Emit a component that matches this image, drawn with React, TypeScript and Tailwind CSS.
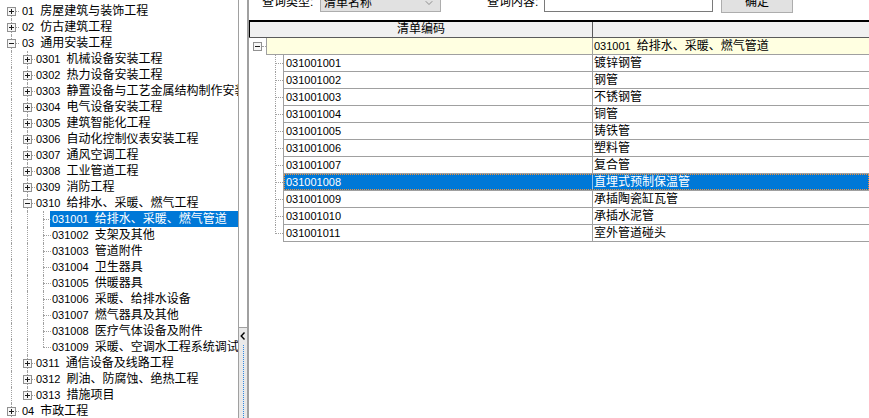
import { ChevronDown } from 'lucide-react';

type TreeNode = { code: string; name: string; open?: boolean; children?: TreeNode[] };

const leaf = (code: string, name: string): TreeNode => ({ code, name });
const shut = (code: string, name: string): TreeNode => ({ code, name, children: [] });

// 左侧清单章节树（只展开 03 / 0310）
const tree: TreeNode[] = [
  shut('01', '房屋建筑与装饰工程'),
  shut('02', '仿古建筑工程'),
  {
    code: '03',
    name: '通用安装工程',
    open: true,
    children: [
      shut('0301', '机械设备安装工程'),
      shut('0302', '热力设备安装工程'),
      shut('0303', '静置设备与工艺金属结构制作安装工程'),
      shut('0304', '电气设备安装工程'),
      shut('0305', '建筑智能化工程'),
      shut('0306', '自动化控制仪表安装工程'),
      shut('0307', '通风空调工程'),
      shut('0308', '工业管道工程'),
      shut('0309', '消防工程'),
      {
        code: '0310',
        name: '给排水、采暖、燃气工程',
        open: true,
        children: [
          leaf('031001', '给排水、采暖、燃气管道'),
          leaf('031002', '支架及其他'),
          leaf('031003', '管道附件'),
          leaf('031004', '卫生器具'),
          leaf('031005', '供暖器具'),
          leaf('031006', '采暖、给排水设备'),
          leaf('031007', '燃气器具及其他'),
          leaf('031008', '医疗气体设备及附件'),
          leaf('031009', '采暖、空调水工程系统调试'),
        ],
      },
      shut('0311', '通信设备及线路工程'),
      shut('0312', '刷油、防腐蚀、绝热工程'),
      shut('0313', '措施项目'),
    ],
  },
  shut('04', '市政工程'),
  shut('05', '园林绿化工程'),
];

const SELECTED_NODE = '031001';

const gridRows: [string, string][] = [
  ['031001001', '镀锌钢管'],
  ['031001002', '钢管'],
  ['031001003', '不锈钢管'],
  ['031001004', '铜管'],
  ['031001005', '铸铁管'],
  ['031001006', '塑料管'],
  ['031001007', '复合管'],
  ['031001008', '直埋式预制保温管'],
  ['031001009', '承插陶瓷缸瓦管'],
  ['031001010', '承插水泥管'],
  ['031001011', '室外管道碰头'],
];

const SELECTED_ROW = '031001008';

type FlatRow = { node: TreeNode; level: number; first: boolean; last: boolean; guides: boolean[] };

function flatten(nodes: TreeNode[], level: number, guides: boolean[], out: FlatRow[]) {
  nodes.forEach((node, i) => {
    const last = i === nodes.length - 1;
    out.push({ node, level, first: level === 0 && i === 0, last, guides });
    if (node.open && node.children) flatten(node.children, level + 1, [...guides, !last], out);
  });
}

function ExpandBox({ open }: { open: boolean }) {
  return (
    <div className="absolute left-[4px] top-[4px] flex h-[9px] w-[9px] items-center justify-center border border-[#919191] bg-[#f7f7f7]">
      <div className="relative h-[5px] w-[5px]">
        <div className="absolute left-0 top-[2px] h-px w-[5px] bg-[#1c1c1c]" />
        {!open ? <div className="absolute left-[2px] top-0 h-[5px] w-px bg-[#1c1c1c]" /> : null}
      </div>
    </div>
  );
}

function Label({ code, name }: { code: string; name: string }) {
  return (
    <>
      <span className="text-[11px]">{code}</span>
      <span className="inline-block w-[6px]" />
      <span>{name}</span>
    </>
  );
}

function TreeRow({ row }: { row: FlatRow }) {
  const { node, level, first, last, guides } = row;
  const hasChildren = !!node.children;
  const selected = node.code === SELECTED_NODE;
  return (
    <div className="flex h-[16px] items-center whitespace-nowrap">
      <div className="w-[3px] shrink-0" />
      {guides.map((cont, l) => (
        <div key={l} className="relative h-full w-[16px] shrink-0">
          {cont ? <div className="absolute left-[8px] top-0 h-full border-l border-dotted border-[#a0a0a0]" /> : null}
        </div>
      ))}
      <div className="relative h-full w-[16px] shrink-0">
        <div
          className={`absolute left-[8px] border-l border-dotted border-[#a0a0a0] ${
            first ? 'top-[8px] h-[8px]' : last ? 'top-0 h-[8px]' : 'top-0 h-full'
          }`}
        />
        <div className="absolute left-[8px] top-[8px] w-[8px] border-t border-dotted border-[#a0a0a0]" />
        {hasChildren ? <ExpandBox open={!!node.open} /> : null}
      </div>
      <span
        className={`-ml-px h-[16px] pl-[2px] leading-[16px] ${level === 0 ? 'ml-px' : ''} ${
          selected ? 'bg-[#0078d7] pr-[12px] text-white' : 'pr-[2px] text-black'
        }`}
      >
        <Label code={node.code} name={node.name} />
      </span>
    </div>
  );
}

function TreePanel() {
  const rows: FlatRow[] = [];
  flatten(tree, 0, [], rows);
  return (
    <div className="h-full w-[239px] shrink-0 overflow-hidden border-r border-[#a0a0a0] bg-white">
      <div className="-mt-[13px]">
        <div className="flex h-[16px] items-center whitespace-nowrap pl-[6px] leading-[16px]">
          建设工程工程量清单计价规范
        </div>
        {rows.map((row) => (
          <TreeRow key={row.node.code} row={row} />
        ))}
      </div>
    </div>
  );
}

function Splitter() {
  return (
    <div className="flex h-full w-[8px] shrink-0 flex-col">
      <div className="h-[328px] border-b border-[#a0a0a0] bg-white" />
      <div className="flex flex-1 flex-col items-center bg-[#e9e9e9] pt-[4px]">
        <svg width="6" height="8" viewBox="0 0 6 8" className="shrink-0">
          <path d="M4.5 0.5 L1.2 4 L4.5 7.5" fill="none" stroke="#000" strokeWidth="1.4" />
        </svg>
        <div className="mt-[5px] flex-1 border-l border-dotted border-[#2f8ae5]" />
      </div>
    </div>
  );
}

function Toolbar() {
  return (
    <div className="h-[20px] shrink-0 overflow-hidden">
      <div className="-mt-[10px] flex items-start pl-[13px]">
        <span className="h-[24px] w-[58px] leading-[24px]">查询类型:</span>
        <div className="mt-px flex h-[21px] w-[121px] items-center justify-between border border-[#adadad] bg-[#e1e1e1] pl-[3px] pr-[5px] pt-[3px]">
          <span>清单名称</span>
          <ChevronDown className="h-[12px] w-[12px] text-[#555]" strokeWidth={1.2} />
        </div>
        <span className="ml-[46px] h-[24px] w-[57px] leading-[24px]">查询内容:</span>
        <div className="mt-px h-[21px] w-[169px] border border-[#7a7a7a] bg-white" />
        <div className="ml-[8px] flex h-[23px] w-[72px] items-center justify-center border border-[#adadad] bg-[#e1e1e1]">
          确定
        </div>
      </div>
    </div>
  );
}

function Grid() {
  return (
    <div className="flex flex-col">
      <div className="flex h-[18px] border-b border-t-2 border-b-[#5a5a5a] border-t-black bg-[#f0f0f0]">
        <div className="flex w-[344px] shrink-0 items-center justify-center border-x border-l-black border-r-[#5a5a5a] leading-[15px]">
          清单编码
        </div>
        <div className="flex-1" />
      </div>

      <div className="flex h-[17px]">
        <div className="relative w-[17px] shrink-0">
          <ExpandBox open />
          <div className="absolute left-[13px] top-[8px] w-[4px] border-t border-dotted border-[#a0a0a0]" />
        </div>
        <div className="w-[327px] shrink-0 border-x border-b border-[#a0a0a0] bg-[#ffffe1]" />
        <div className="flex-1 whitespace-nowrap border-b border-[#a0a0a0] bg-[#ffffe1] pl-[1px] leading-[16px]">
          <Label code="031001" name="给排水、采暖、燃气管道" />
        </div>
      </div>

      {gridRows.map(([code, name], i) => {
        const last = i === gridRows.length - 1;
        const selected = code === SELECTED_ROW;
        return (
          <div key={code} className="flex h-[17px]">
            <div className="relative w-[34px] shrink-0">
              <div
                className={`absolute left-[26px] top-0 border-l border-dotted border-[#a0a0a0] ${last ? 'h-[9px]' : 'h-full'}`}
              />
              <div className="absolute left-[27px] top-[8px] w-[7px] border-t border-dotted border-[#a0a0a0]" />
            </div>
            <div
              className={`relative flex flex-1 border-b border-l border-[#a0a0a0] ${
                selected ? 'bg-[#0078d7] text-white' : 'bg-white text-black'
              }`}
            >
              <div
                className={`w-[309px] shrink-0 border-r pl-[2px] text-[11px] leading-[16px] ${
                  selected ? 'border-[#8fbfea]' : 'border-[#a0a0a0]'
                }`}
              >
                {code}
              </div>
              <div className="flex-1 whitespace-nowrap pl-[1px] leading-[16px]">{name}</div>
              {selected ? (
                <div className="pointer-events-none absolute inset-0 border border-dotted border-[#f0923a]" />
              ) : null}
            </div>
          </div>
        );
      })}
    </div>
  );
}

export default function App() {
  return (
    <div className="flex h-[418px] w-[869px] overflow-hidden bg-white font-['Liberation_Sans','Noto_Sans_CJK_SC',sans-serif] text-[12px] text-black">
      <TreePanel />
      <Splitter />
      <div className="flex h-full min-w-0 flex-1 flex-col border-l-2 border-[#a0a0a0]">
        <Toolbar />
        <Grid />
      </div>
    </div>
  );
}
